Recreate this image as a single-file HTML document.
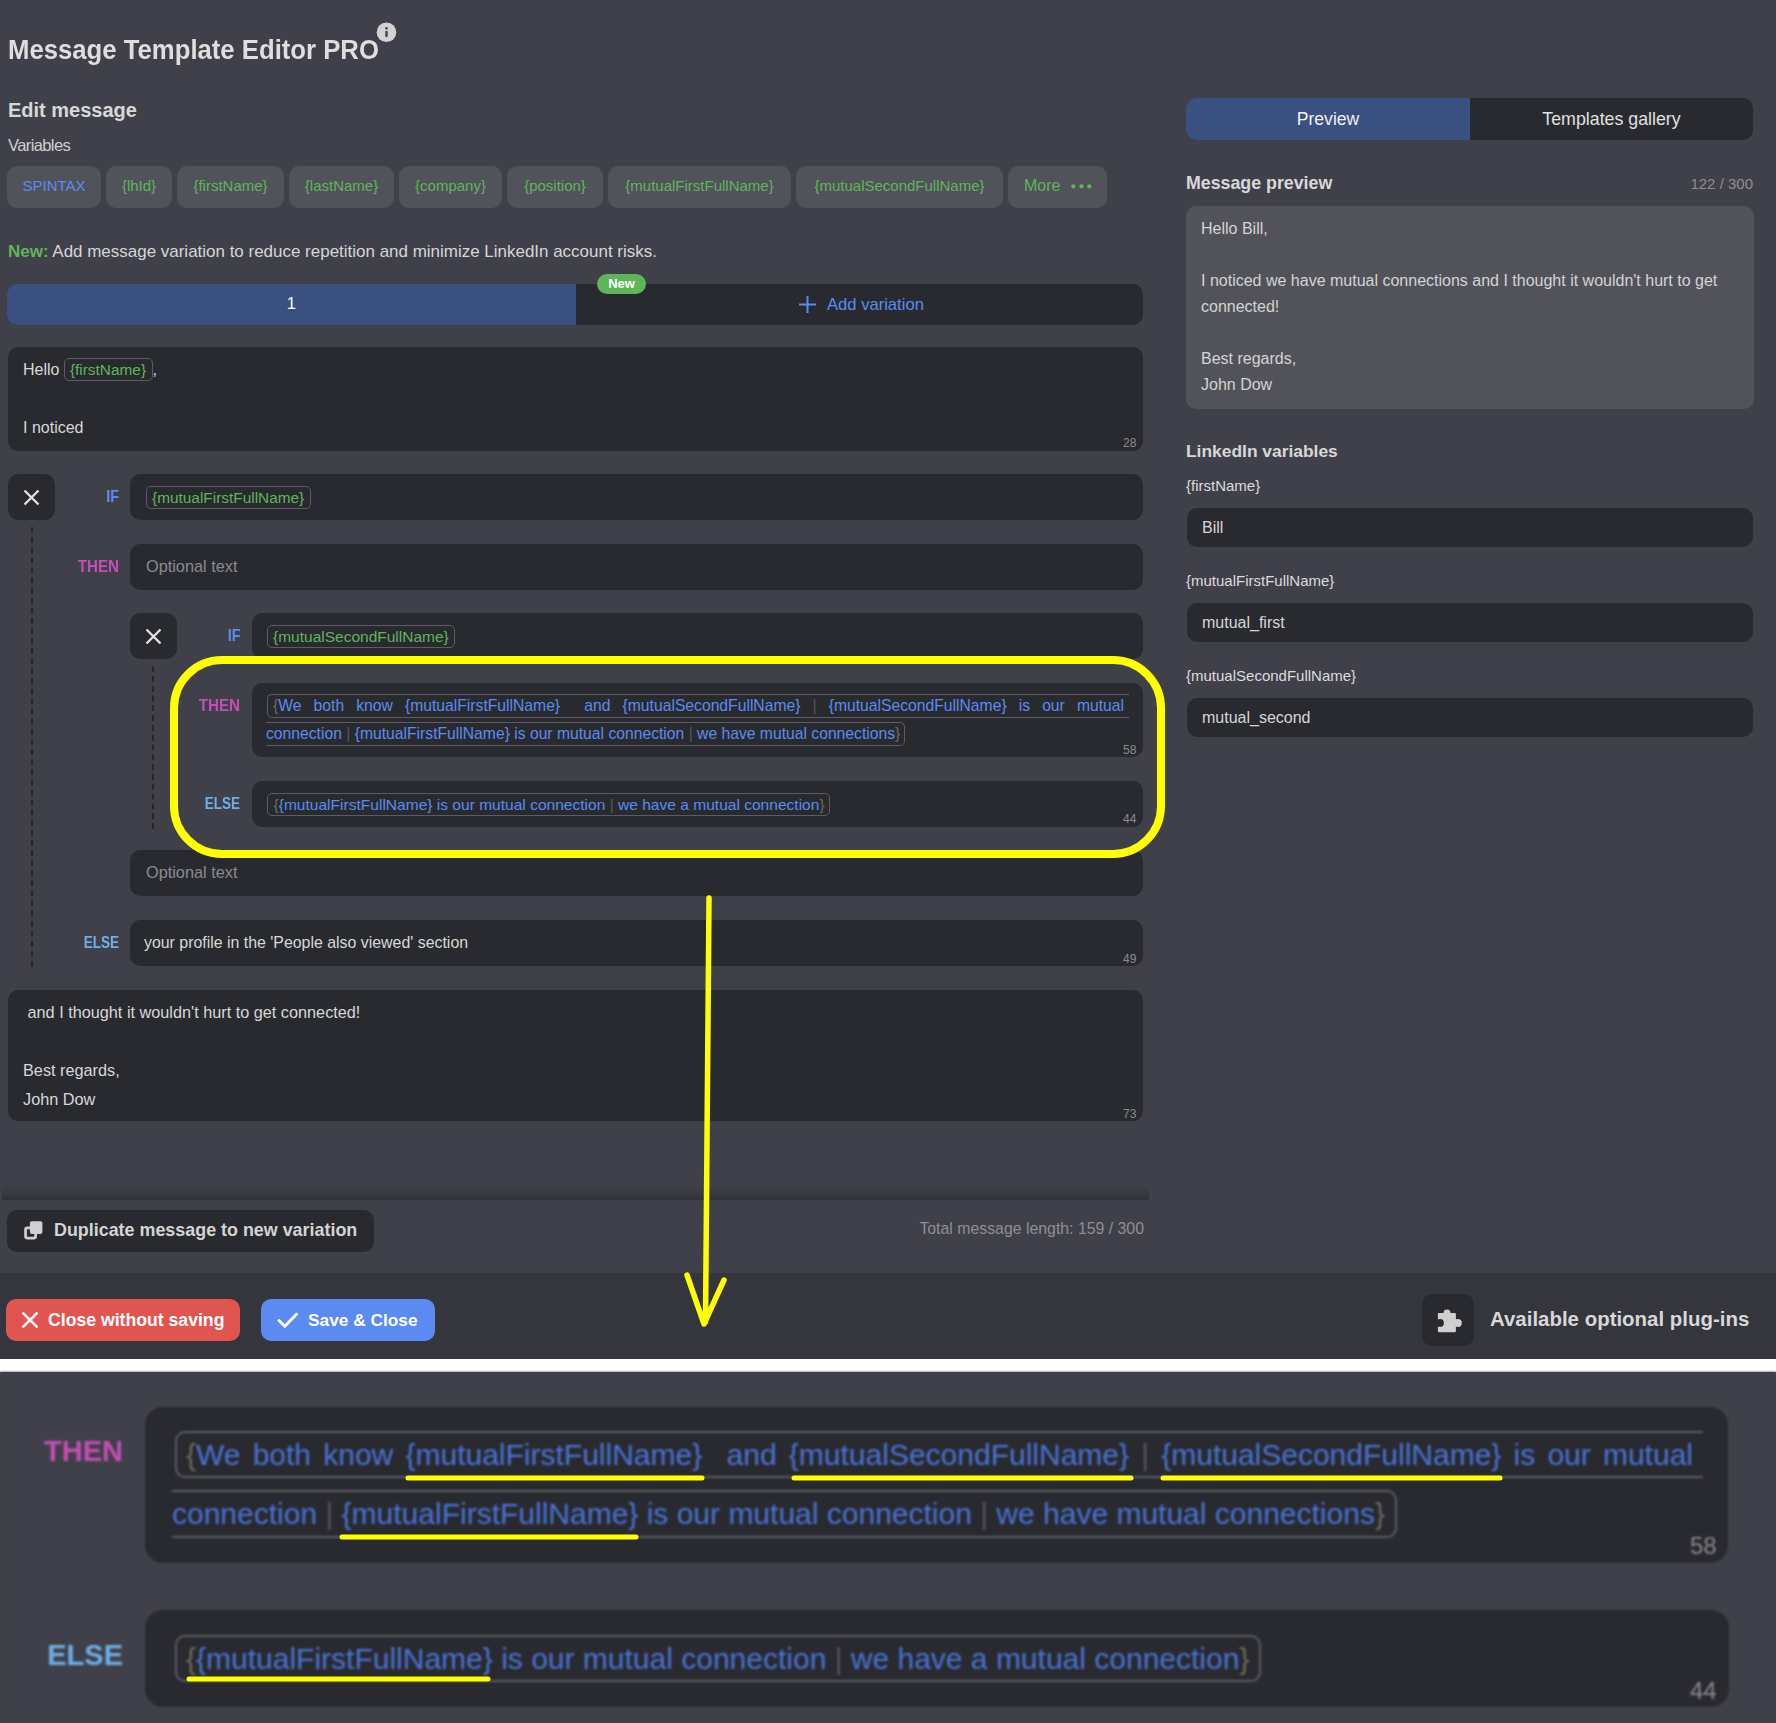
<!DOCTYPE html>
<html><head><meta charset="utf-8">
<style>
*{margin:0;padding:0;box-sizing:border-box}
html,body{width:1776px;height:1723px;overflow:hidden;background:#40404a;font-family:"Liberation Sans",sans-serif;color:#dcdcdc}
.a{position:absolute;white-space:nowrap}
.box{position:absolute;background:#292a2f;border-radius:10px}
.chip{position:absolute;top:166px;height:42px;background:#52525b;border-radius:10px;color:#5fb55a;font-size:15px;line-height:40px;text-align:center}
.tag{display:inline-block;border:1px solid #5c5c64;border-radius:5px;padding:0 5.5px 0 5px;line-height:21px;color:#5fb55a;font-size:15.4px}
.lbl{position:absolute;transform-origin:100% 0;font-weight:bold;font-size:16.5px;line-height:16px;text-align:right;white-space:nowrap}
.if{color:#5a8cf0}.then{color:#c44fb5}.else{color:#6db0ea}
.xb{position:absolute;width:47px;height:46px;background:#292a2f;border-radius:10px}
.xb svg{position:absolute;left:15px;top:15px}
.cnt{position:absolute;font-size:12px;color:#8a8a90;line-height:12px}
.ph{color:#8a8a90}
.dash{position:absolute;width:0;border-left:2px dashed #26262b}
.blue{color:#5a8cf0}
.sp{border:1px solid #5c5c64;border-radius:5px;color:#5a8cf0;-webkit-box-decoration-break:slice;box-decoration-break:slice;padding:1px 2px}
.pipe{color:#56565c}
.br{color:#6f685e}
.sp1{border:1px solid #5c5c64;border-right:0;border-radius:5px 0 0 5px;color:#5a8cf0;text-align:justify;text-align-last:justify;white-space:pre-wrap}
.bsp1{border:2px solid #5c5c64;border-right:0;border-radius:10px 0 0 10px;color:#4a74da;text-align:justify;text-align-last:justify;white-space:pre-wrap}
.bsp2{border:2px solid #5c5c64;border-left:0;border-radius:0 10px 10px 0;color:#4a74da}
.bsp{border:2px solid #5c5c64;border-radius:10px;color:#4a74da}
.sp2{border:1px solid #5c5c64;border-left:0;border-radius:0 5px 5px 0;color:#5a8cf0}
</style></head><body>
<!-- top main area -->
<div class="a" style="left:8px;top:32px;font-size:27px;font-weight:bold;line-height:36px;color:#dedede;transform:scaleX(0.952);transform-origin:0 0">Message Template Editor PRO</div>
<svg class="a" style="left:376px;top:22px" width="21" height="21" viewBox="0 0 21 21"><circle cx="10.5" cy="10.3" r="9.8" fill="#d2d2d2"/><rect x="9.3" y="8.8" width="2.4" height="6.4" rx="1.1" fill="#40404a"/><circle cx="10.5" cy="6.3" r="1.3" fill="#40404a"/></svg>
<div class="a" style="left:8px;top:97px;font-size:20px;font-weight:bold;line-height:26px;color:#d8d8d8">Edit message</div>
<div class="a" style="left:8px;top:134.5px;font-size:16.5px;line-height:20px;color:#cfcfcf;letter-spacing:-0.6px">Variables</div>

<div class="chip" style="left:7px;width:94px;color:#5a8cf0">SPINTAX</div>
<div class="chip" style="left:106px;width:66px">{lhId}</div>
<div class="chip" style="left:177px;width:107px">{firstName}</div>
<div class="chip" style="left:289px;width:105px">{lastName}</div>
<div class="chip" style="left:399px;width:103px">{company}</div>
<div class="chip" style="left:507px;width:96px">{position}</div>
<div class="chip" style="left:608px;width:183px">{mutualFirstFullName}</div>
<div class="chip" style="left:796px;width:207px">{mutualSecondFullName}</div>
<div class="chip" style="left:1008px;width:99px;text-align:left;padding-left:16px;font-size:16px">More</div><svg class="a" style="left:1065px;top:180px" width="30" height="12" viewBox="0 0 30 12" fill="#5fb55a"><circle cx="8.4" cy="6.3" r="2.1"/><circle cx="16.5" cy="6.3" r="2.1"/><circle cx="24.3" cy="6.3" r="2.1"/></svg>

<div class="a" style="left:8px;top:242px;font-size:16.98px;line-height:20px;color:#d6d6d6"><b style="color:#5fb55a">New:</b> Add message variation to reduce repetition and minimize LinkedIn account risks.</div>

<div class="box" style="left:7px;top:284px;width:1136px;height:41px;background:#292a2f"></div>
<div class="a" style="left:7px;top:284px;width:568.5px;height:41px;background:#3a5080;border-radius:10px 0 0 10px;text-align:center;line-height:39px;font-size:16.5px;color:#fff">1</div>
<svg class="a" style="left:790px;top:285px" width="40" height="40" viewBox="0 0 40 40"><path d="M9 19.5H26M17.5 11V28" stroke="#5a8cf0" stroke-width="2"/></svg><div class="a" style="left:827px;top:294.5px;font-size:16.6px;line-height:20px;color:#5a8cf0">Add variation</div>
<div class="a" style="left:597px;top:274px;width:49px;height:20px;background:#5fb55a;border-radius:10px;font-size:13px;font-weight:bold;line-height:20px;text-align:center;color:#fff">New</div>

<!-- first text box -->
<div class="box" style="left:8px;top:347px;width:1135px;height:104px"></div>
<div class="a" style="left:23px;top:355px;font-size:16px;line-height:29px;color:#d8d8d8">Hello <span class="tag">{firstName}</span>,<br><br>I noticed</div>
<div class="cnt" style="left:1123px;top:437px">28</div>

<!-- IF row -->
<div class="xb" style="left:8px;top:474px"><svg width="17" height="17" viewBox="0 0 17 17"><path d="M1.5 1.5L15.5 15.5M15.5 1.5L1.5 15.5" stroke="#e0e0e0" stroke-width="2.4"/></svg></div>
<div class="dash" style="left:31px;top:527px;height:440px"></div>
<div class="lbl if" style="left:79px;top:488px;width:40px;transform:scaleX(0.87)">IF</div>
<div class="box" style="left:130px;top:474px;width:1013px;height:46px"></div>
<div class="a" style="left:146px;top:486px;font-size:16px;line-height:24px"><span class="tag">{mutualFirstFullName}</span></div>

<!-- THEN row -->
<div class="lbl then" style="left:59px;top:558px;width:60px;transform:scaleX(0.92)">THEN</div>
<div class="box" style="left:130px;top:544px;width:1013px;height:46px"></div>
<div class="a ph" style="left:146px;top:555px;font-size:16.3px;line-height:22px">Optional text</div>

<!-- nested IF -->
<div class="xb" style="left:130px;top:613px"><svg width="17" height="17" viewBox="0 0 17 17"><path d="M1.5 1.5L15.5 15.5M15.5 1.5L1.5 15.5" stroke="#e0e0e0" stroke-width="2.4"/></svg></div>
<div class="dash" style="left:152px;top:666px;height:163px"></div>
<div class="lbl if" style="left:200px;top:627px;width:40.5px;transform:scaleX(0.87)">IF</div>
<div class="box" style="left:252px;top:613px;width:891px;height:46px"></div>
<div class="a" style="left:267px;top:625px;font-size:16px;line-height:24px"><span class="tag" style="font-size:15.5px">{mutualSecondFullName}</span></div>

<!-- nested THEN -->
<div class="lbl then" style="left:180px;top:697px;width:60px;transform:scaleX(0.92)">THEN</div>
<div class="box" style="left:252px;top:683px;width:891px;height:74px"></div>
<div class="a sp1" style="left:267px;top:694px;width:862px;height:24px;font-size:15.7px;line-height:22px;padding-left:5px;padding-right:5px"><span class="br">{</span>We both know {mutualFirstFullName}  and {mutualSecondFullName} <span class="pipe">|</span> {mutualSecondFullName} is our mutual</div>
<div class="a sp2" style="left:266px;top:722px;height:24px;font-size:15.7px;line-height:22px;padding-right:4px">connection <span class="pipe">|</span> {mutualFirstFullName} is our mutual connection <span class="pipe">|</span> we have mutual connections<span class="br">}</span></div>
<div class="cnt" style="left:1123px;top:744px">58</div>

<!-- nested ELSE -->
<div class="lbl else" style="left:180px;top:795px;width:60px;transform:scaleX(0.82)">ELSE</div>
<div class="box" style="left:252px;top:781px;width:891px;height:46px"></div>
<div class="a" style="left:267px;top:792px;font-size:15.55px;line-height:24px"><span class="sp" style="padding:1.5px 4px 3px 5.5px"><span class="br">{</span>{mutualFirstFullName} is our mutual connection <span class="pipe">|</span> we have a mutual connection<span class="br">}</span></span></div>
<div class="cnt" style="left:1123px;top:813px">44</div>

<!-- optional text after nested -->
<div class="box" style="left:130px;top:850px;width:1013px;height:46px"></div>
<div class="a ph" style="left:146px;top:861px;font-size:16.3px;line-height:22px">Optional text</div>

<!-- ELSE outer -->
<div class="lbl else" style="left:59px;top:934px;width:60px;transform:scaleX(0.82)">ELSE</div>
<div class="box" style="left:130px;top:920px;width:1013px;height:46px"></div>
<div class="a" style="left:144px;top:932px;font-size:15.9px;line-height:22px;color:#d8d8d8">your profile in the 'People also viewed' section</div>
<div class="cnt" style="left:1123px;top:953px">49</div>

<!-- final text box -->
<div class="box" style="left:8px;top:990px;width:1135px;height:131px"></div>
<div class="a" style="left:23px;top:998px;font-size:16.25px;line-height:29px;color:#d8d8d8">&nbsp;and I thought it wouldn't hurt to get connected!<br><br>Best regards,<br>John Dow</div>
<div class="cnt" style="left:1123px;top:1108px">73</div>

<!-- separator -->
<div class="a" style="left:2px;top:1186px;width:1147px;height:14px;background:linear-gradient(#40404a00,#36363d 70%,#303037)"></div>

<!-- duplicate button -->
<div class="box" style="left:7px;top:1210px;width:367px;height:42px"></div>
<svg class="a" style="left:22px;top:1219px" width="24" height="24" viewBox="0 0 24 24"><rect x="3.55" y="8.95" width="10.1" height="10.2" rx="1.8" fill="none" stroke="#d0d0d0" stroke-width="2.7"/><rect x="7.9" y="2.2" width="12.5" height="12.8" rx="2" fill="#d0d0d0"/></svg>
<div class="a" style="left:54px;top:1219px;font-size:17.9px;font-weight:bold;line-height:22px;color:#d4d4d4">Duplicate message to new variation</div>
<div class="a" style="left:844px;width:300px;text-align:right;top:1219px;font-size:15.85px;line-height:20px;color:#8e8e94">Total message length: 159 / 300</div>

<!-- right panel -->
<div class="box" style="left:1186px;top:98px;width:567px;height:42px"></div>
<div class="a" style="left:1186px;top:98px;width:284px;height:42px;background:#3a5080;border-radius:10px 0 0 10px;text-align:center;line-height:42px;font-size:17.6px;color:#f0f0f0">Preview</div>
<div class="a" style="left:1470px;top:98px;width:283px;height:42px;text-align:center;line-height:42px;font-size:17.8px;color:#e0e0e0">Templates gallery</div>

<div class="a" style="left:1186px;top:172px;font-size:17.8px;font-weight:bold;line-height:22px;color:#d8d8d8">Message preview</div>
<div class="a" style="left:1680px;top:174px;width:73px;text-align:right;font-size:15px;line-height:20px;color:#8e8e94">122 / 300</div>
<div class="a" style="left:1186px;top:206px;width:568px;height:203px;background:#52525b;border-radius:10px"></div>
<div class="a" style="left:1201px;top:216px;font-size:16px;line-height:26px;color:#d4d4d4">Hello Bill,<br><br>I noticed we have mutual connections and I thought it wouldn't hurt to get<br>connected!<br><br>Best regards,<br>John Dow</div>

<div class="a" style="left:1186px;top:440px;font-size:17.4px;font-weight:bold;line-height:22px;color:#d8d8d8">LinkedIn variables</div>
<div class="a" style="left:1186px;top:476px;font-size:15px;line-height:20px;color:#dcdcdc">{firstName}</div>
<div class="box" style="left:1187px;top:508px;width:566px;height:39px"></div>
<div class="a" style="left:1202px;top:518px;font-size:16px;line-height:20px;color:#d6d6d6">Bill</div>
<div class="a" style="left:1186px;top:571px;font-size:15px;line-height:20px;color:#dcdcdc">{mutualFirstFullName}</div>
<div class="box" style="left:1187px;top:603px;width:566px;height:39px"></div>
<div class="a" style="left:1202px;top:613px;font-size:16px;line-height:20px;color:#d6d6d6">mutual_first</div>
<div class="a" style="left:1186px;top:666px;font-size:15px;line-height:20px;color:#dcdcdc">{mutualSecondFullName}</div>
<div class="box" style="left:1187px;top:698px;width:566px;height:39px"></div>
<div class="a" style="left:1202px;top:708px;font-size:16px;line-height:20px;color:#d6d6d6">mutual_second</div>

<!-- footer -->
<div class="a" style="left:0;top:1273px;width:1776px;height:86px;background:#35353e"></div>
<div class="a" style="left:6px;top:1299px;width:234px;height:42px;background:#e0554f;border-radius:10px"></div>
<svg class="a" style="left:21px;top:1311px" width="18" height="18" viewBox="0 0 18 18"><path d="M2.3 2.3L15.7 15.7M15.7 2.3L2.3 15.7" stroke="#fff" stroke-width="2.6" stroke-linecap="round"/></svg>
<div class="a" style="left:48px;top:1309px;font-size:17.65px;font-weight:bold;line-height:22px;color:#fff">Close without saving</div>
<div class="a" style="left:261px;top:1299px;width:174px;height:42px;background:#5b8af0;border-radius:10px"></div>
<svg class="a" style="left:277px;top:1311px" width="22" height="18" viewBox="0 0 22 18"><path d="M2 9.5L7.8 15.3L19.5 3.3" stroke="#fff" stroke-width="3" fill="none" stroke-linecap="round" stroke-linejoin="round"/></svg>
<div class="a" style="left:308px;top:1309px;font-size:17.3px;font-weight:bold;line-height:22px;color:#fff">Save &amp; Close</div>
<div class="a" style="left:1422px;top:1294px;width:52px;height:52px;background:#292a2f;border-radius:10px"></div>
<svg class="a" style="left:1420px;top:1290px" width="60" height="60" viewBox="0 0 60 60"><rect x="17.9" y="23" width="18" height="19.2" rx="1.2" fill="#cfcfcf"/><circle cx="27" cy="22.8" r="3.4" fill="#cfcfcf"/><rect x="23.6" y="22.8" width="6.8" height="2" fill="#cfcfcf"/><circle cx="37.9" cy="33" r="3.9" fill="#cfcfcf"/><circle cx="20" cy="32.9" r="3.9" fill="#292a2f"/><rect x="15" y="29" width="3" height="8" fill="#292a2f"/></svg>
<div class="a" style="left:1490px;top:1307px;font-size:20.45px;font-weight:bold;line-height:24px;color:#d8d8d8">Available optional plug-ins</div>

<!-- white band -->
<div class="a" style="left:0;top:1359px;width:1776px;height:13px;background:#ffffff"></div>

<!-- yellow annotations -->
<svg class="a" style="left:0;top:0" width="1776" height="1372" viewBox="0 0 1776 1372">
<rect x="174" y="660" width="987" height="194" rx="48" ry="48" fill="none" stroke="#ffff00" stroke-width="8"/>
<path d="M709 898L705.5 1322M687 1275L704 1324L724 1280" stroke="#ffff00" stroke-width="5.5" fill="none" stroke-linecap="round" stroke-linejoin="round"/>
</svg>

<!-- bottom zoomed section -->
<div class="a" style="left:0;top:1372px;width:1776px;height:351px;background:#40404a;overflow:hidden;filter:blur(1px)">
 <div class="a" style="left:40px;top:64px;width:83px;text-align:right;font-weight:bold;font-size:29px;line-height:30px;color:#c44fb5">THEN</div>
 <div class="box" style="left:145px;top:35px;width:1583px;height:156px;border-radius:18px"></div>
 <div class="a bsp1" style="left:175px;top:59px;width:1528px;height:47px;font-size:30px;line-height:44px;padding-left:9px;padding-right:10px"><span class="br">{</span>We both know {mutualFirstFullName}  and {mutualSecondFullName} <span class="pipe">|</span> {mutualSecondFullName} is our mutual</div>
 <div class="a bsp2" style="left:172px;top:118px;height:48px;font-size:30px;line-height:44px;padding-right:10px">connection <span class="pipe">|</span> {mutualFirstFullName} is our mutual connection <span class="pipe">|</span> we have mutual connections<span class="br">}</span></div>
 <div class="a" style="left:1690px;top:162px;font-size:24px;line-height:24px;color:#8a8a90">58</div>
 <div class="a" style="left:40px;top:268px;width:83px;text-align:right;font-weight:bold;font-size:29px;line-height:30px;color:#6db0ea">ELSE</div>
 <div class="box" style="left:145px;top:238px;width:1584px;height:97px;border-radius:18px"></div>
 <div class="a bsp" style="left:175px;top:263px;height:47px;font-size:30px;line-height:44px;padding:0 10px 0 9px"><span class="br">{</span>{mutualFirstFullName} is our mutual connection <span class="pipe">|</span> we have a mutual connection<span class="br">}</span></div>
 <div class="a" style="left:1690px;top:307px;font-size:24px;line-height:24px;color:#8a8a90">44</div>
</div>
<svg class="a" style="left:0;top:1372px" width="1776" height="351" viewBox="0 0 1776 351" stroke="#ffff00" stroke-width="5" stroke-linecap="round">
 <path d="M408 106H702M794 106H1131M1163 106H1500M342 165H636M189 307H488"/>
</svg>
</body></html>
